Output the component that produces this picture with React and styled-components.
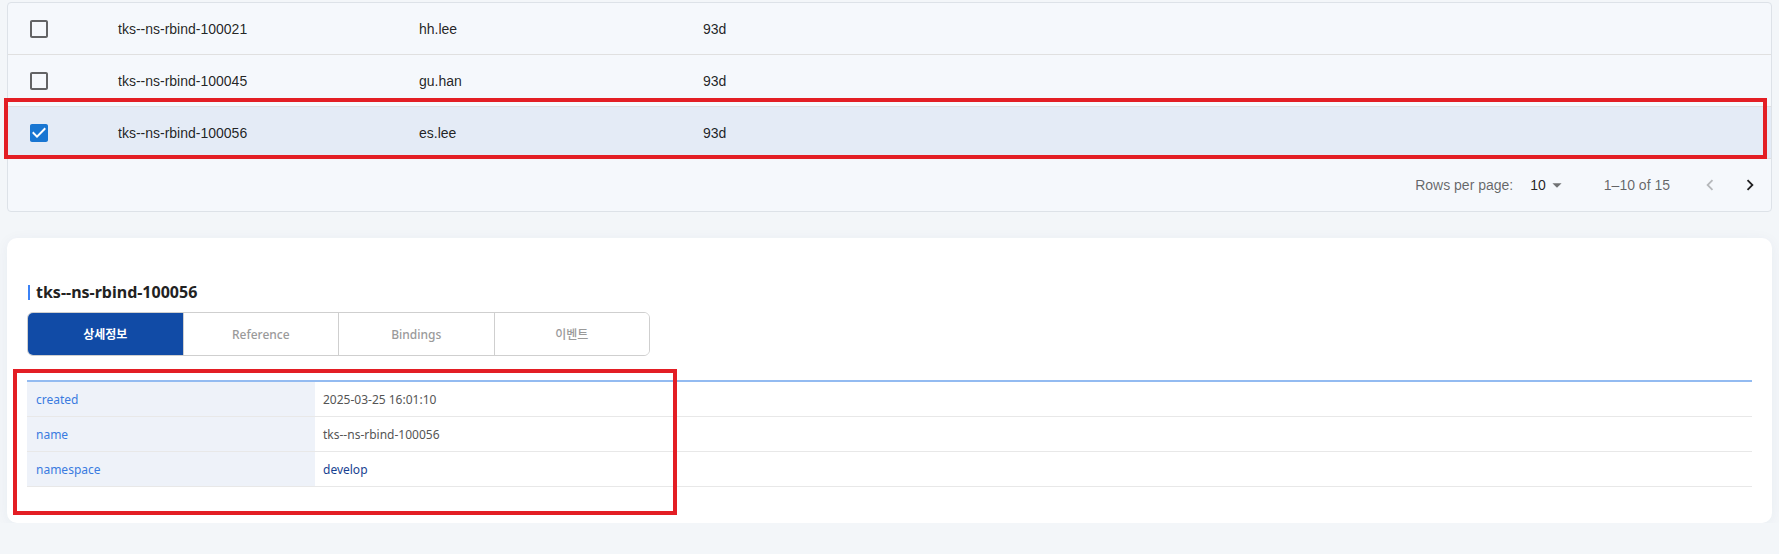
import styled, { createGlobalStyle } from "styled-components";

const GlobalStyle = createGlobalStyle`
    body {
        margin: 0;
        background: #f3f6f9;
        font-family: "Liberation Sans", Arial, sans-serif;
    }
`;

const Page = styled.div`
    display: flex;
    flex-direction: column;
    gap: 26px;
    padding: 2px 7px 0 7px;
`;

const ListCard = styled.div`
    border: 1px solid #dde2e8;
    border-radius: 4px;
    background: #f5f8fc;
`;

const Row = styled.div`
    position: relative;
    display: grid;
    grid-template-columns: 110px 301px 284px 1fr;
    align-items: center;
    height: 52px;
    box-sizing: border-box;
    border-bottom: 1px solid #e0e0e0;
    background: ${(props) => (props.selected ? "#e4ebf6" : "transparent")};
    font-size: 14px;
    color: rgba(0, 0, 0, 0.87);
`;

const CheckCell = styled.div`
    display: flex;
    padding-left: 19px;
`;

const Cell = styled.div`
    white-space: nowrap;
`;

// red annotation boxes laid over the content
const RowMark = styled.span`
    position: absolute;
    top: -9px;
    left: -4px;
    right: 4px;
    bottom: -1px;
    border: 4px solid #e31e24;
    pointer-events: none;
`;

const Footer = styled.div`
    display: flex;
    justify-content: flex-end;
    align-items: center;
    height: 52px;
    padding-right: 1px;
    color: rgba(0, 0, 0, 0.6);
`;

const FooterLabel = styled.span`
    font-size: 14px;
`;

const PageSelect = styled.div`
    display: flex;
    align-items: center;
    margin-left: 17px;
    font-size: 14px;
    color: rgba(0, 0, 0, 0.87);
`;

const Range = styled.span`
    margin-left: 36px;
    font-size: 14px;
`;

const Actions = styled.div`
    display: flex;
    margin-left: 20px;
`;

const NavButton = styled.button`
    width: 40px;
    height: 40px;
    border: 0;
    padding: 0;
    background: none;
    display: flex;
    align-items: center;
    justify-content: center;
    color: ${(props) => (props.disabled ? "rgba(0,0,0,0.26)" : "rgba(0,0,0,0.87)")};
`;

const DetailCard = styled.div`
    background: #fff;
    border-radius: 10px;
    box-shadow: 0 2px 14px rgba(30, 50, 90, 0.05);
    padding: 44px 20px 36px 20px;
    font-family: "Noto Sans", "Noto Sans CJK KR", sans-serif;
`;

const Title = styled.h2`
    display: flex;
    align-items: center;
    height: 20px;
    margin: 0 0 10px 0;
    font-size: 16px;
    font-weight: 700;
    color: #222;
    &::before {
        content: "";
        width: 2px;
        height: 15px;
        margin: 0 6px 0 1px;
        background: #3b82f6;
    }
`;

const Tabs = styled.div`
    display: flex;
    width: 623px;
    height: 44px;
    box-sizing: border-box;
    border: 1px solid #cfcfcf;
    border-radius: 6px;
    overflow: hidden;
`;

const Tab = styled.div`
    flex: 1;
    display: flex;
    align-items: center;
    justify-content: center;
    font-size: 12px;
    font-weight: ${(props) => (props.active ? 700 : 500)};
    color: ${(props) => (props.active ? "#fff" : "#9a9a9a")};
    background: ${(props) => (props.active ? "#114ba6" : "#fff")};
    & + & {
        border-left: 1px solid #cfcfcf;
    }
`;

const InfoWrap = styled.div`
    position: relative;
    margin-top: 24px;
    border-top: 2px solid #93bbf1;
`;

const InfoMark = styled.span`
    position: absolute;
    top: -13px;
    left: -14px;
    width: 664px;
    height: 146px;
    box-sizing: border-box;
    border: 4px solid #e31e24;
    pointer-events: none;
`;

const InfoRow = styled.div`
    display: grid;
    grid-template-columns: 288px 1fr;
    height: 35px;
    box-sizing: border-box;
    border-bottom: 1px solid #e8e8e8;
    font-size: 12px;
`;

const InfoLabel = styled.div`
    display: flex;
    align-items: center;
    padding-left: 9px;
    background: #eef2f9;
    color: #3a7be0;
`;

const InfoValue = styled.div`
    display: flex;
    align-items: center;
    padding-left: 8px;
    color: ${(props) => (props.link ? "#173f91" : "#555")};
`;

const CheckBox = ({ checked }) =>
    checked ? (
        <svg width="24" height="24" viewBox="0 0 24 24">
            <rect x="6" y="6" width="12" height="12" fill="#fff" />
            <path
                fill="#1976d2"
                d="M19 3H5c-1.11 0-2 .9-2 2v14c0 1.1.89 2 2 2h14c1.11 0 2-.9 2-2V5c0-1.1-.89-2-2-2zm-9 14l-5-5 1.41-1.41L10 14.17l7.59-7.59L19 8l-9 9z"
            />
        </svg>
    ) : (
        <svg width="24" height="24" viewBox="0 0 24 24">
            <path
                fill="rgba(0,0,0,0.6)"
                d="M19 5v14H5V5h14m0-2H5c-1.11 0-2 .9-2 2v14c0 1.1.89 2 2 2h14c1.1 0 2-.9 2-2V5c0-1.1-.9-2-2-2z"
            />
        </svg>
    );

const rows = [
    { name: "tks--ns-rbind-100021", user: "hh.lee", age: "93d" },
    { name: "tks--ns-rbind-100045", user: "gu.han", age: "93d" },
    { name: "tks--ns-rbind-100056", user: "es.lee", age: "93d", selected: true },
];

const info = [
    { label: "created", value: "2025-03-25 16:01:10" },
    { label: "name", value: "tks--ns-rbind-100056" },
    { label: "namespace", value: "develop", link: true },
];

const tabs = ["상세정보", "Reference", "Bindings", "이벤트"];

const App = () => {
    return (
        <>
            <GlobalStyle />
            <Page>
                <ListCard>
                    {rows.map((r) => (
                        <Row key={r.name} selected={r.selected}>
                            <CheckCell>
                                <CheckBox checked={r.selected} />
                            </CheckCell>
                            <Cell>{r.name}</Cell>
                            <Cell>{r.user}</Cell>
                            <Cell>{r.age}</Cell>
                            {r.selected && <RowMark />}
                        </Row>
                    ))}
                    <Footer>
                        <FooterLabel>Rows per page:</FooterLabel>
                        <PageSelect>
                            10
                            <svg width="22" height="22" viewBox="0 0 24 24">
                                <path fill="rgba(0,0,0,0.54)" d="M7 10l5 5 5-5z" />
                            </svg>
                        </PageSelect>
                        <Range>1–10 of 15</Range>
                        <Actions>
                            <NavButton disabled>
                                <svg width="22" height="22" viewBox="0 0 24 24">
                                    <path fill="currentColor" d="M15.41 16.59L10.83 12l4.58-4.59L14 6l-6 6 6 6 1.41-1.41z" />
                                </svg>
                            </NavButton>
                            <NavButton>
                                <svg width="22" height="22" viewBox="0 0 24 24">
                                    <path fill="currentColor" d="M8.59 16.59L13.17 12 8.59 7.41 10 6l6 6-6 6-1.41-1.41z" />
                                </svg>
                            </NavButton>
                        </Actions>
                    </Footer>
                </ListCard>

                <DetailCard>
                    <Title>tks--ns-rbind-100056</Title>
                    <Tabs>
                        {tabs.map((t, i) => (
                            <Tab key={t} active={i === 0}>
                                {t}
                            </Tab>
                        ))}
                    </Tabs>
                    <InfoWrap>
                        {info.map((it) => (
                            <InfoRow key={it.label}>
                                <InfoLabel>{it.label}</InfoLabel>
                                <InfoValue link={it.link}>{it.value}</InfoValue>
                            </InfoRow>
                        ))}
                        <InfoMark />
                    </InfoWrap>
                </DetailCard>
            </Page>
        </>
    );
};

export default App;
